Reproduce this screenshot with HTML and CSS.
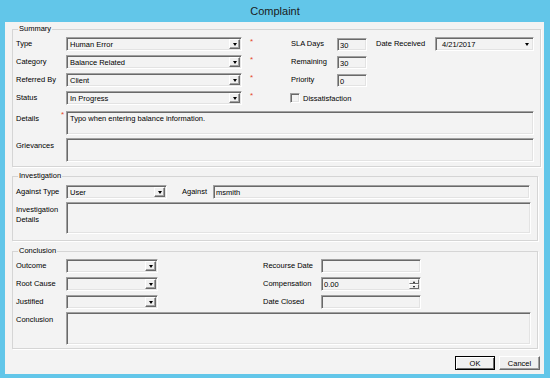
FILE: index.html
```html
<!DOCTYPE html>
<html>
<head>
    <link rel="stylesheet" href="styles.css">
</head>
<body>
<div class="window">
    <div class="titlebar">Complaint</div>
    <div class="client">

        <fieldset class="group">
            <legend>Summary</legend>
            <div class="summary-top">
                <div class="field-grid">
                    <label>Type</label>
                    <div class="combo sunken"><span class="value">Human Error</span><span class="drop"></span></div>
                    <span class="req">*</span>

                    <label>Category</label>
                    <div class="combo sunken"><span class="value">Balance Related</span><span class="drop"></span></div>
                    <span class="req">*</span>

                    <label>Referred By</label>
                    <div class="combo sunken"><span class="value">Client</span><span class="drop"></span></div>
                    <span class="req">*</span>

                    <label>Status</label>
                    <div class="combo sunken"><span class="value">In Progress</span><span class="drop"></span></div>
                    <span class="req">*</span>
                </div>

                <div class="sla-grid">
                    <label>SLA Days</label>
                    <div class="box sunken">30</div>
                    <label>Remaining</label>
                    <div class="box sunken">30</div>
                    <label>Priority</label>
                    <div class="box sunken">0</div>
                    <div class="check"><span class="checkbox sunken"></span>Dissatisfaction</div>
                </div>

                <div class="date-field">
                    <label>Date Received</label>
                    <div class="combo combo-date sunken"><span class="value">4/21/2017</span><span class="drop flat"></span></div>
                </div>
            </div>

            <div class="memo-row memo-first">
                <label>Details</label>
                <span class="req req-inline">*</span>
                <div class="memo sunken">Typo when entering balance information.</div>
            </div>
            <div class="memo-row">
                <label>Grievances</label>
                <div class="memo sunken"></div>
            </div>
        </fieldset>

        <fieldset class="group group-investigation">
            <legend>Investigation</legend>
            <div class="against-row">
                <label class="col-label">Against Type</label>
                <div class="combo combo-type sunken"><span class="value">User</span><span class="drop"></span></div>
                <label class="against-label">Against</label>
                <div class="box box-wide sunken">msmith</div>
            </div>
            <div class="memo-row">
                <label>Investigation Details</label>
                <div class="memo memo-tall sunken"></div>
            </div>
        </fieldset>

        <fieldset class="group group-conclusion">
            <legend>Conclusion</legend>
            <div class="conclusion-top">
                <div class="outcome-grid">
                    <label>Outcome</label>
                    <div class="combo combo-short sunken"><span class="value"></span><span class="drop"></span></div>
                    <label>Root Cause</label>
                    <div class="combo combo-short sunken"><span class="value"></span><span class="drop"></span></div>
                    <label>Justified</label>
                    <div class="combo combo-short sunken"><span class="value"></span><span class="drop"></span></div>
                </div>
                <div class="recourse-grid">
                    <label>Recourse Date</label>
                    <div class="box box-date sunken"></div>
                    <label>Compensation</label>
                    <div class="box box-date spin-box sunken">
                        <span class="value">0.00</span>
                        <span class="spinner"><span class="spin up"></span><span class="spin down"></span></span>
                    </div>
                    <label>Date Closed</label>
                    <div class="box box-date sunken"></div>
                </div>
            </div>
            <div class="memo-row">
                <label>Conclusion</label>
                <div class="memo memo-conclusion sunken"></div>
            </div>
        </fieldset>

        <div class="buttons">
            <button class="btn btn-default">OK</button>
            <button class="btn">Cancel</button>
        </div>
    </div>
</div>
</body>
</html>
```

FILE: styles.css
```css
* {
    box-sizing: border-box;
}

body {
    margin: 0;
    padding: 0;
    background-color: #62c6e9;
    font-family: "Liberation Sans", Arial, sans-serif;
    font-size: 7.5px;
    color: #000;
}

.window {
    width: 550px;
    height: 378px;
    display: flex;
    flex-direction: column;
}

.titlebar {
    height: 22px;
    line-height: 22px;
    text-align: center;
    font-size: 11px;
    color: #1b1b1b;
}

.client {
    margin: 0 6px 4px 5px;
    height: 352px;
    background-color: #f3f3f3;
    padding: 2px 6px 0 7px;
}

label {
    line-height: 10px;
}

/* 3d sunken border used by every edit control */
.sunken {
    border: 1px solid;
    border-color: #a0a0a0 #ffffff #ffffff #a0a0a0;
    box-shadow: inset 1px 1px 0 #696969, inset -1px -1px 0 #e3e3e3;
    background-color: #f3f3f3;
}

.group {
    margin: 0;
    padding: 3px 6px 4px 3px;
    border: 1px solid #d5d5d5;
    box-shadow: 1px 1px 0 #ffffff;
}

.group legend {
    margin-left: 2px;
    padding: 0 1px;
    line-height: 10px;
}

.group-investigation {
    margin-top: 4px;
    padding-top: 4px;
    padding-bottom: 6px;
}

.group-conclusion {
    margin-top: 5px;
    padding-bottom: 3px;
}

/* summary */
.summary-top {
    display: flex;
    align-items: flex-start;
}

.field-grid {
    display: grid;
    grid-template-columns: 50px 176px 49px;
    grid-auto-rows: 14px;
    row-gap: 4px;
    align-items: center;
}

.combo {
    display: flex;
    align-items: stretch;
    height: 14px;
    padding: 1px;
}

.combo .value {
    flex: 1;
    padding-left: 2px;
    line-height: 12px;
    white-space: nowrap;
    overflow: hidden;
}

.drop {
    width: 11px;
    display: flex;
    align-items: center;
    justify-content: center;
    background-color: #f0f0f0;
    border: 1px solid;
    border-color: #ffffff #696969 #696969 #ffffff;
    box-shadow: inset -1px -1px 0 #a0a0a0;
}

.drop::after {
    content: "";
    border-left: 2.5px solid transparent;
    border-right: 2.5px solid transparent;
    border-top: 3px solid #000;
    margin-top: 1px;
}

.drop.flat {
    border-color: transparent;
    box-shadow: none;
    background-color: transparent;
}

.req {
    color: #e5462a;
    font-size: 8px;
    padding-left: 8px;
    align-self: start;
    line-height: 8px;
    margin-top: 1px;
}

.sla-grid {
    display: grid;
    grid-template-columns: 46px 30px;
    grid-auto-rows: 14px;
    row-gap: 4px;
    align-items: center;
}

.box {
    height: 13px;
    padding: 1px 2px 0;
    line-height: 11px;
    white-space: nowrap;
}

.check {
    grid-column: span 2;
    display: flex;
    align-items: center;
    margin-left: -1px;
}

.checkbox {
    width: 10px;
    height: 10px;
    margin-right: 3px;
    background-color: #f3f3f3;
}

.date-field {
    display: flex;
    align-items: center;
    margin-left: 9px;
}

.date-field label {
    width: 59px;
}

.combo-date {
    width: 99px;
}

.combo-date .value {
    padding-left: 5px;
}

.field-grid .combo {
    width: 176px;
}

/* memo rows */
.memo-row {
    display: flex;
    margin-top: 3px;
}

.memo-first {
    margin-top: 6px;
}

.memo-row label {
    width: 50px;
    padding-top: 3px;
    flex-shrink: 0;
}

.memo-first label {
    width: 45px;
}

.req-inline {
    width: 5px;
    padding-left: 0;
    margin-top: 0;
}

.memo {
    flex: 1;
    height: 24px;
    padding: 2px 3px;
    line-height: 10px;
}

.memo-tall {
    height: 32px;
}

.memo-conclusion {
    height: 33px;
}

/* investigation */
.against-row {
    display: flex;
    align-items: center;
    height: 14px;
}

.col-label {
    width: 50px;
}

.combo-type {
    width: 101px;
}

.against-label {
    width: 31px;
    margin-left: 15px;
}

.box-wide {
    width: 317px;
    height: 14px;
}

/* conclusion */
.conclusion-top {
    display: flex;
}

.outcome-grid {
    display: grid;
    grid-template-columns: 50px 92px;
    grid-auto-rows: 14px;
    row-gap: 4px;
    align-items: center;
}

.recourse-grid {
    margin-left: 105px;
    display: grid;
    grid-template-columns: 58px 100px;
    grid-auto-rows: 14px;
    row-gap: 4px;
    align-items: center;
}

.box-date {
    height: 14px;
}

.spin-box {
    display: flex;
    padding: 1px 1px 1px 2px;
}

.spin-box .value {
    flex: 1;
    line-height: 11px;
}

.spinner {
    width: 10px;
    display: flex;
    flex-direction: column;
}

.spin {
    flex: 1;
    display: flex;
    align-items: center;
    justify-content: center;
    border: 1px solid;
    border-color: #ffffff #696969 #696969 #ffffff;
    background-color: #f0f0f0;
}

.spin::after {
    content: "";
    border-left: 1.5px solid transparent;
    border-right: 1.5px solid transparent;
}

.spin.up::after {
    border-bottom: 2px solid #000;
}

.spin.down::after {
    border-top: 2px solid #000;
}

/* dialog buttons */
.buttons {
    display: flex;
    justify-content: flex-end;
    gap: 4px;
    margin-top: 7px;
    margin-right: -2px;
}

.btn {
    height: 14px;
    width: 40px;
    padding: 0;
    font-family: "Liberation Sans", Arial, sans-serif;
    font-size: 7.5px;
    color: #000;
    background-color: #f0f0f0;
    border: 1px solid;
    border-color: #ffffff #696969 #696969 #ffffff;
    box-shadow: inset -1px -1px 0 #a0a0a0;
}

.btn-default {
    border-color: #000;
    box-shadow: inset 1px 1px 0 #ffffff, inset -1px -1px 0 #696969;
}

.buttons .btn:last-child {
    width: 41px;
}
```
